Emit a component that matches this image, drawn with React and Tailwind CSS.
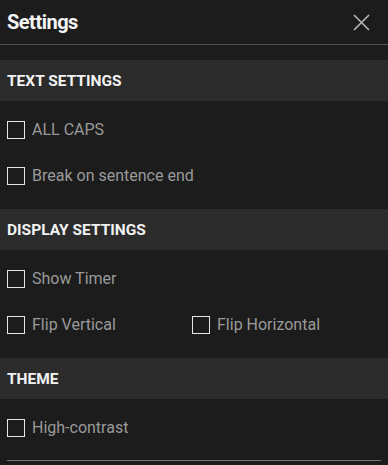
import React, { useState } from 'react';

const Check = ({ label, checked, onChange }) => (
    <label className="flex items-center gap-[7px] cursor-pointer select-none">
        <input type="checkbox" checked={checked} onChange={onChange} className="sr-only" />
        <span className="w-[18px] h-[18px] border border-[#e6e6e6] flex items-center justify-center">
            {checked && <span className="w-[10px] h-[10px] bg-[#e6e6e6]"></span>}
        </span>
        <span className="text-[16px] text-[#9a9a9a]">{label}</span>
    </label>
);

const Band = ({ title }) => (
    <div className="h-[41px] bg-[#2b2b2b] flex items-center px-[7px] pt-[3px]">
        <h3 className="text-[15.5px] font-bold text-[#f2f2f2]">{title}</h3>
    </div>
);

const Section = ({ title, children }) => (
    <div>
        <Band title={title} />
        <div className="pt-[6px] pb-[10px]">{children}</div>
    </div>
);

const App = () => {
    const [opts, setOpts] = useState({});
    const toggle = (k) => () => setOpts((o) => ({ ...o, [k]: !o[k] }));

    return (
        <div className="w-[388px] h-[465px] bg-[#1c1c1c] overflow-hidden font-['Roboto',sans-serif]">
            {/* Header */}
            <div className="h-[45px] flex items-center justify-between pl-[7px] pr-[18px] border-b border-[#4f4f4f] mb-[15px]">
                <h2 className="text-[20px] font-bold text-[#f4f4f4] tracking-tight">Settings</h2>
                <button className="text-[#b5b5b5]">
                    <svg width="17" height="17" viewBox="0 0 17 17" fill="none" stroke="currentColor" strokeWidth="1.6">
                        <path d="M1 1L16 16M16 1L1 16" />
                    </svg>
                </button>
            </div>

            <Section title="TEXT SETTINGS">
                <div className="h-[46px] flex items-center px-[7px]">
                    <Check label="ALL CAPS" checked={!!opts.caps} onChange={toggle('caps')} />
                </div>
                <div className="h-[46px] flex items-center px-[7px]">
                    <Check label="Break on sentence end" checked={!!opts.brk} onChange={toggle('brk')} />
                </div>
            </Section>

            <Section title="DISPLAY SETTINGS">
                <div className="h-[46px] flex items-center px-[7px]">
                    <Check label="Show Timer" checked={!!opts.timer} onChange={toggle('timer')} />
                </div>
                <div className="h-[46px] grid grid-cols-[185px_1fr] items-center px-[7px]">
                    <Check label="Flip Vertical" checked={!!opts.fv} onChange={toggle('fv')} />
                    <Check label="Flip Horizontal" checked={!!opts.fh} onChange={toggle('fh')} />
                </div>
            </Section>

            <div>
                <Band title="THEME" />
                <div className="pt-[6px]">
                    <div className="h-[46px] flex items-center px-[7px]">
                        <Check label="High-contrast" checked={!!opts.hc} onChange={toggle('hc')} />
                    </div>
                    <div className="mt-[9px] mx-[7px] border-t border-[#777]"></div>
                </div>
            </div>
        </div>
    );
};

export default App;
